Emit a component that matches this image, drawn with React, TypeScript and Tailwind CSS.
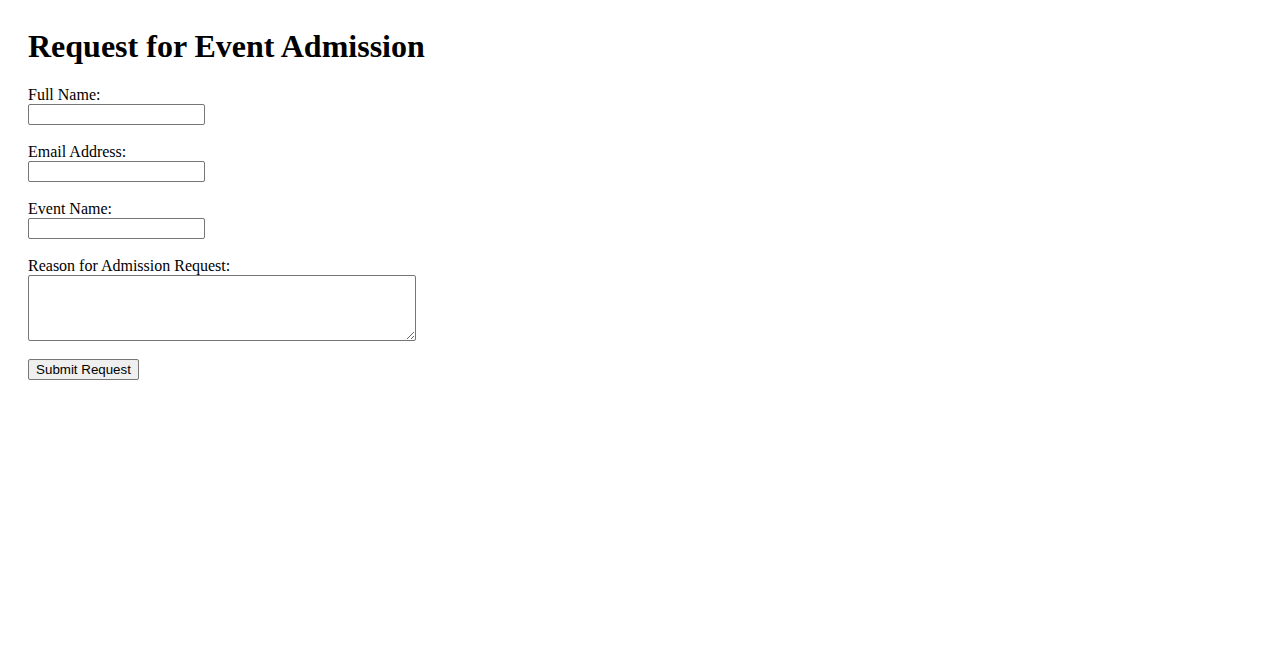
export default function App() {
  const serif = { fontFamily: '"Liberation Serif", "Times New Roman", serif' };
  return (
    <div className="min-h-[650px] bg-white pt-[28px] pl-[28px] text-black" style={serif}>
      <h1 className="m-0 mb-[21px] text-[32px] font-bold leading-[37px]">Request for Event Admission</h1>
      <form className="flex flex-col items-start" onSubmit={(e) => e.preventDefault()}>
        <label className="block text-[16px] leading-[18px]">Full Name:</label>
        <input type="text" className="mb-[18px] block h-[21px] w-[177px] rounded-[2px] border border-[#767676] bg-white px-[2px] text-[13.333px]" />
        <label className="block text-[16px] leading-[18px]">Email Address:</label>
        <input type="email" className="mb-[18px] block h-[21px] w-[177px] rounded-[2px] border border-[#767676] bg-white px-[2px] text-[13.333px]" />
        <label className="block text-[16px] leading-[18px]">Event Name:</label>
        <input type="text" className="mb-[18px] block h-[21px] w-[177px] rounded-[2px] border border-[#767676] bg-white px-[2px] text-[13.333px]" />
        <label className="block text-[16px] leading-[18px]">Reason for Admission Request:</label>
        <textarea className="mb-[18px] block h-[66px] w-[388px] resize rounded-[2px] border border-[#767676] bg-white p-[2px] text-[13.333px]" />
        <button
          type="submit"
          className="block h-[21px] w-[111px] rounded-[2px] border border-[#767676] bg-[#efefef] p-0 text-center text-[13.333px] leading-[19px] text-black"
          style={{ fontFamily: '"Liberation Sans", Arial, sans-serif' }}
        >
          Submit Request
        </button>
      </form>
    </div>
  );
}
